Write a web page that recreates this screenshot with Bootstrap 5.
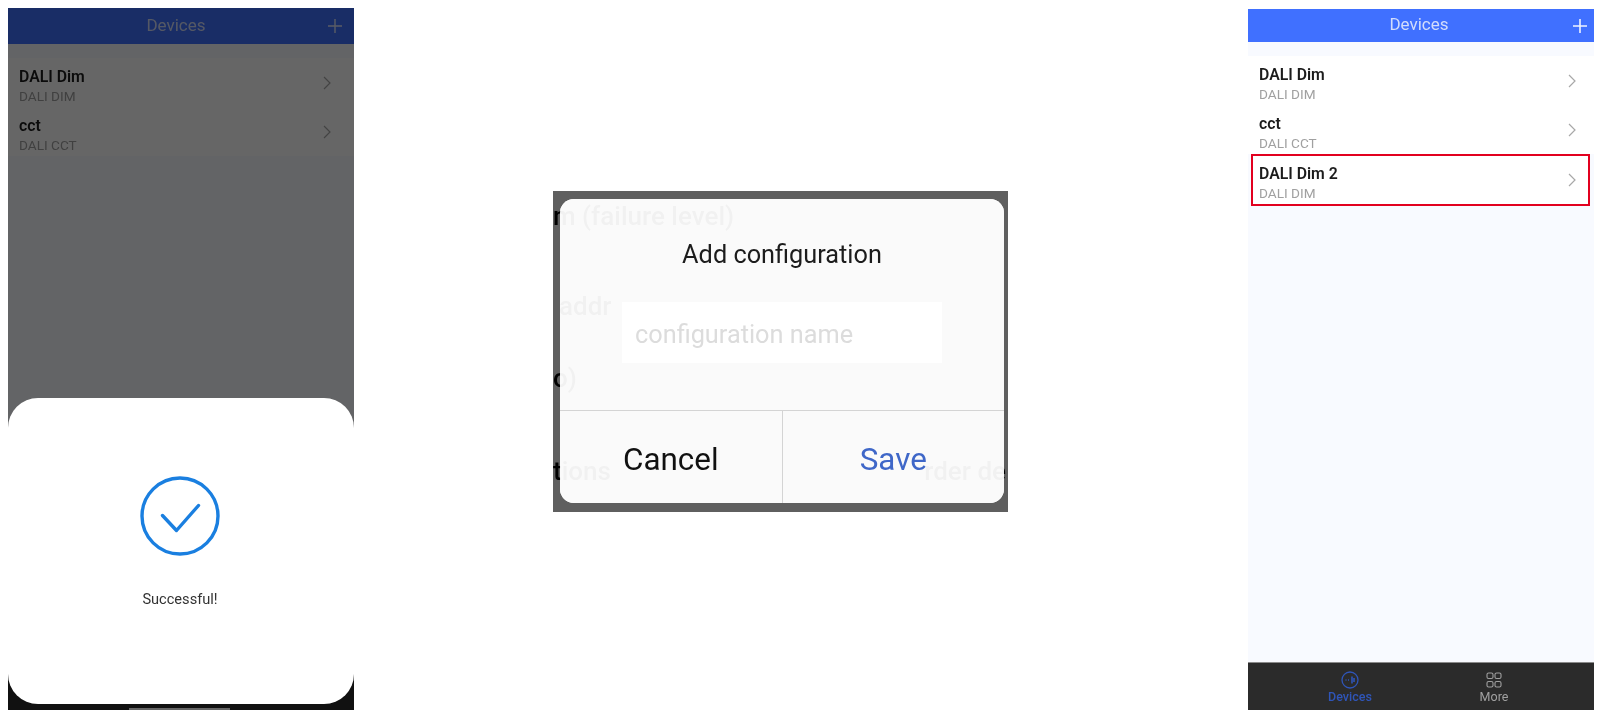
<!doctype html>
<html lang="en">
<head>
  <meta charset="utf-8">
  <meta name="viewport" content="width=device-width, initial-scale=1">
  <title>Devices</title>
  <link href="https://cdn.jsdelivr.net/npm/bootstrap@5.3.0/dist/css/bootstrap.min.css" rel="stylesheet">
  <style>
    body { background: #fff; font-family: Roboto, "Liberation Sans", sans-serif; overflow: hidden; }
    .phone { width: 346px; background: #f8faff; filter: blur(.5px); }
    .phone-left { height: 702px; margin: 8px 0 0 8px; }
    .phone-right { height: 701px; margin: 9px 0 0 240px; }
    .app-head { background: #4070ff; color: #d3ddfb; font-size: 17px; position: relative; }
    .phone-left .app-head { height: 36px; padding-right: 10px; }
    .phone-right .app-head { height: 33px; padding: 0 4px 2px 0; }
    .app-plus { position: absolute; top: 50%; transform: translateY(-50%); }
    .phone-left .app-plus { right: 11px; }
    .phone-right .app-plus { right: 6px; }
    .phone-left .dev-list { padding-top: 14px; }
    .phone-right .dev-list { padding-top: 14px; }
    .dev-item { height: 49px; background: #fff; padding: 0 18px 0 11px; }
    .phone-left .dev-item { padding-right: 23px; }
    .dev-item-marked { height: 52px; margin: 0 4px 0 3px; border: 2px solid #e2001f; padding: 0 12px 0 6px; }
    .dev-text { margin-top: 6px; }
    .dev-name { font-size: 15.8px; font-weight: 600; color: #1c1c1c; line-height: 19px; }
    .dev-sub { font-size: 13.6px; color: #a0a0a0; line-height: 17px; margin-top: 2px; }
    .tab-bar { height: 48px; background: #2b2b2b; border-top: 1px solid #8a8a8a; padding: 0 27px; }
    .tab-slot { width: 146px; padding-top: 8px; }
    .tab-on { padding-left: 4px; }
    .tab-label { font-size: 12.5px; line-height: 14px; margin-top: 1px; }
    .tab-on { color: #2f55b8; font-weight: 500; }
    .tab-off { color: #a0a0a0; }
    .dim-layer { background: rgba(0, 0, 0, .6); z-index: 2; }
    .done-sheet { left: 0; right: 0; bottom: 6px; height: 306px; background: #fff; border-radius: 30px; z-index: 3; padding: 78px 2px 0 0; }
    .done-text { font-size: 14.6px; color: #333; margin-top: 33px; }
    .home-line { left: 121px; width: 101px; bottom: 0; height: 2px; background: #666; z-index: 3; }

    .dialog-frame { width: 455px; height: 321px; margin: 191px 0 0 199px; background: #5f5f5f; padding: 8px 4px 9px 7px; filter: blur(.35px); }
    .ghost { color: #000; font-size: 26px; font-weight: 500; line-height: 30px; z-index: 1; white-space: nowrap; }
    .ghost-a { left: 0; top: 10px; }
    .ghost-b { left: 6px; top: 100px; }
    .ghost-c { left: 0; top: 172px; }
    .ghost-d { left: 0; top: 265px; }
    .ghost-e { right: 2px; top: 265px; }
    .dialog-under { left: 7px; right: 4px; top: 8px; bottom: 9px; background: #fff; border-radius: 14px; }
    .add-dialog { height: 100%; background: rgba(250, 250, 250, .965); border-radius: 14px; z-index: 2; }
    .add-title { font-size: 25.3px; color: #1c1c1c; height: 103px; padding-top: 41px; line-height: 30px; }
    .add-input { width: 320px; height: 61px; margin-left: 62px; background: #fff; border: 0; padding: 3px 13px 0; font-size: 25.3px; color: #333; outline: 0; font-family: Roboto, sans-serif; }
    .add-input::placeholder { color: #dcdcdc; opacity: 1; }
    .add-actions { height: 93px; margin-top: 47px; border-top: 1px solid #d4d4d4; }
    .add-btn { font-size: 31.4px; background: transparent; border: 0; color: #111; flex: 1 1 0; padding-top: 6px; }
    .add-save { color: #3f67c8; border-left: 1px solid #d4d4d4; }
  </style>
</head>
<body>
  <div class="d-flex align-items-start">

    <div class="phone phone-left d-flex flex-column position-relative">
      <div class="app-head d-flex align-items-center justify-content-center">
        <span>Devices</span>
        <svg class="app-plus" width="16" height="16" viewBox="0 0 16 16" fill="none" stroke="#dfe6fb" stroke-width="1.4"><path d="M8 1v14M1 8h14"/></svg>
      </div>
      <div class="dev-list flex-grow-1">
        <div class="dev-item d-flex align-items-center justify-content-between">
          <div class="dev-text"><div class="dev-name">DALI Dim</div><div class="dev-sub">DALI DIM</div></div>
          <svg width="8" height="14" viewBox="0 0 8 14" fill="none" stroke="#a8a8a8" stroke-width="1.2"><path d="M1 1l6 6-6 6"/></svg>
        </div>
        <div class="dev-item d-flex align-items-center justify-content-between">
          <div class="dev-text"><div class="dev-name">cct</div><div class="dev-sub">DALI CCT</div></div>
          <svg width="8" height="14" viewBox="0 0 8 14" fill="none" stroke="#a8a8a8" stroke-width="1.2"><path d="M1 1l6 6-6 6"/></svg>
        </div>
      </div>
      <div class="tab-bar"></div>
      <div class="dim-layer position-absolute top-0 bottom-0 start-0 end-0"></div>
      <div class="done-sheet position-absolute text-center">
        <svg width="80" height="80" viewBox="0 0 80 80" fill="none" stroke="#1a7fe0" stroke-width="3.4" stroke-linecap="round" stroke-linejoin="round">
          <circle cx="40" cy="40" r="38"/>
          <path d="M22.5 39.5l14 15 22-25"/>
        </svg>
        <div class="done-text">Successful!</div>
      </div>
      <div class="home-line position-absolute"></div>
    </div>

    <div class="dialog-frame position-relative overflow-hidden">
      <div class="dialog-under position-absolute"></div>
      <span class="ghost ghost-a position-absolute">m (failure level)</span>
      <span class="ghost ghost-b position-absolute">addr</span>
      <span class="ghost ghost-c position-absolute">o)</span>
      <span class="ghost ghost-d position-absolute">tions</span>
      <span class="ghost ghost-e position-absolute">rder de</span>
      <div class="add-dialog position-relative">
        <div class="add-title text-center">Add configuration</div>
        <input class="add-input d-block" type="text" placeholder="configuration name">
        <div class="add-actions d-flex">
          <button class="add-btn" type="button">Cancel</button>
          <button class="add-btn add-save" type="button">Save</button>
        </div>
      </div>
    </div>

    <div class="phone phone-right d-flex flex-column">
      <div class="app-head d-flex align-items-center justify-content-center">
        <span>Devices</span>
        <svg class="app-plus" width="16" height="16" viewBox="0 0 16 16" fill="none" stroke="#eef2ff" stroke-width="1.6"><path d="M8 1v14M1 8h14"/></svg>
      </div>
      <div class="dev-list flex-grow-1">
        <div class="dev-item d-flex align-items-center justify-content-between">
          <div class="dev-text"><div class="dev-name">DALI Dim</div><div class="dev-sub">DALI DIM</div></div>
          <svg width="8" height="14" viewBox="0 0 8 14" fill="none" stroke="#a8a8a8" stroke-width="1.2"><path d="M1 1l6 6-6 6"/></svg>
        </div>
        <div class="dev-item d-flex align-items-center justify-content-between">
          <div class="dev-text"><div class="dev-name">cct</div><div class="dev-sub">DALI CCT</div></div>
          <svg width="8" height="14" viewBox="0 0 8 14" fill="none" stroke="#a8a8a8" stroke-width="1.2"><path d="M1 1l6 6-6 6"/></svg>
        </div>
        <div class="dev-item dev-item-marked d-flex align-items-center justify-content-between">
          <div class="dev-text"><div class="dev-name">DALI Dim 2</div><div class="dev-sub">DALI DIM</div></div>
          <svg width="8" height="14" viewBox="0 0 8 14" fill="none" stroke="#a8a8a8" stroke-width="1.2"><path d="M1 1l6 6-6 6"/></svg>
        </div>
      </div>
      <div class="tab-bar d-flex">
        <div class="tab-slot text-center tab-on">
          <svg class="d-block mx-auto" width="18" height="18" viewBox="0 0 18 18" fill="none" stroke="#2f55b8" stroke-width="1.3">
            <circle cx="9" cy="9" r="8"/>
            <path d="M4.5 9h1M7 9h1M11 5.5v7M13 7v4" stroke-width="1.6"/>
          </svg>
          <div class="tab-label">Devices</div>
        </div>
        <div class="tab-slot text-center tab-off">
          <svg class="d-block mx-auto" width="16" height="18" viewBox="0 0 16 18" fill="none" stroke="#a0a0a0" stroke-width="1.1">
            <rect x="1" y="2" width="6" height="5.5" rx="1.6"/>
            <rect x="9" y="2" width="6" height="5.5" rx="1.6"/>
            <rect x="1" y="10.5" width="6" height="5.5" rx="1.6"/>
            <rect x="9" y="10.5" width="6" height="5.5" rx="1.6"/>
          </svg>
          <div class="tab-label">More</div>
        </div>
      </div>
    </div>

  </div>
  <script src="https://cdn.jsdelivr.net/npm/bootstrap@5.3.0/dist/js/bootstrap.bundle.min.js"></script>
</body>
</html>
